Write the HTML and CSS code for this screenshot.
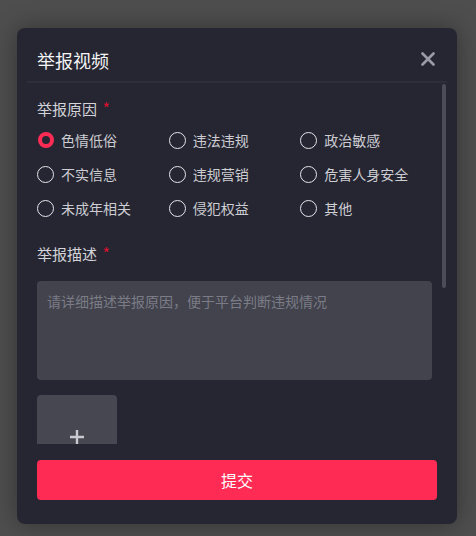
FILE: index.html
```html
<!DOCTYPE html>
<html lang="zh-CN">
<head>
  <meta charset="UTF-8">
  <meta name="viewport" content="width=device-width, initial-scale=1.0">
  <title>举报视频</title>
  <link rel="stylesheet" href="styles.css">
</head>
<body>

  <div class="modal">
    <!-- Header -->
    <div class="modal-header">
      <h2>举报视频</h2>
      <button class="close-btn" aria-label="关闭">
        <svg width="14" height="14" viewBox="0 0 14 14"><path d="M1.5 1.5 L12.5 12.5 M12.5 1.5 L1.5 12.5" stroke="#9a9ba4" stroke-width="2.6" stroke-linecap="round"/></svg>
      </button>
    </div>

    <!-- Scrolling form -->
    <div class="body-wrap">
      <div class="modal-body">
        <div class="field-label">举报原因 <span class="req">*</span></div>
        <div class="reasons">
          <label class="radio"><input type="radio" name="reason" checked><span>色情低俗</span></label>
          <label class="radio"><input type="radio" name="reason"><span>违法违规</span></label>
          <label class="radio"><input type="radio" name="reason"><span>政治敏感</span></label>
          <label class="radio"><input type="radio" name="reason"><span>不实信息</span></label>
          <label class="radio"><input type="radio" name="reason"><span>违规营销</span></label>
          <label class="radio"><input type="radio" name="reason"><span>危害人身安全</span></label>
          <label class="radio"><input type="radio" name="reason"><span>未成年相关</span></label>
          <label class="radio"><input type="radio" name="reason"><span>侵犯权益</span></label>
          <label class="radio"><input type="radio" name="reason"><span>其他</span></label>
        </div>

        <div class="field-label desc-label">举报描述 <span class="req">*</span></div>
        <textarea class="desc" placeholder="请详细描述举报原因，便于平台判断违规情况"></textarea>

        <div class="upload">
          <svg width="16" height="16" viewBox="0 0 16 16"><path d="M8 1 V15 M1 8 H15" stroke="#c9c9cf" stroke-width="2.4"/></svg>
        </div>
      </div>
      <!-- scrollbar thumb, drawn over the body -->
      <div class="scroll-thumb"></div>
    </div>

    <!-- Footer -->
    <div class="modal-footer">
      <button class="submit-btn">提交</button>
    </div>
  </div>

</body>
</html>
```

FILE: styles.css
```css
* {
  margin: 0;
  padding: 0;
  box-sizing: border-box;
}

body {
  font-family: "Noto Sans CJK SC", "Liberation Sans", sans-serif;
  background-color: #4e4e4e;
  height: 100vh;
  overflow: hidden;
  padding: 28px 0 0 17px;
}

.modal {
  width: 440px;
  height: 496px;
  background-color: #252632;
  border-radius: 8px;
  box-shadow: 0 0 24px rgba(0, 0, 0, 0.35);
  display: flex;
  flex-direction: column;
}

.modal-header {
  display: flex;
  justify-content: space-between;
  align-items: flex-start;
  margin: 0 10px;
  padding: 20px 12px 9px 10px;
  border-bottom: 2px solid #2d2e39;
}

.modal-header h2 {
  font-size: 18px;
  line-height: 24px;
  font-weight: 400;
  color: #f4f4f6;
}

.close-btn {
  background: none;
  border: none;
  cursor: pointer;
  margin-top: 4px;
  width: 14px;
  height: 14px;
  display: flex;
}

.body-wrap {
  flex: 1;
  min-height: 0;
  margin: 0 10px;
  position: relative;
}

.modal-body {
  height: 100%;
  padding: 16px 15px 0 10px;
  overflow: hidden;
}

.scroll-thumb {
  position: absolute;
  top: 1px;
  right: 1px;
  width: 4px;
  height: 204px;
  border-radius: 2px;
  background-color: #4b4c58;
}

.field-label {
  height: 20px;
  font-size: 15px;
  line-height: 20px;
  color: #d3d3d8;
}

.req {
  color: #d8102e;
  font-size: 16px;
  line-height: 1;
  margin-left: 2px;
}

.reasons {
  display: grid;
  grid-template-columns: repeat(3, 1fr);
  row-gap: 14px;
  margin-top: 11px;
}

.radio {
  display: flex;
  align-items: center;
  gap: 7px;
  height: 20px;
  font-size: 14px;
  color: #cdcdd2;
  cursor: pointer;
}

.radio input {
  appearance: none;
  -webkit-appearance: none;
  width: 17px;
  height: 17px;
  border: 1.5px solid #e6e6ea;
  border-radius: 50%;
  margin: 0;
  flex-shrink: 0;
}

.radio input:checked {
  border: 4px solid #fe2c55;
  width: 16px;
  height: 16px;
  margin: 0 0.5px;
}

.desc-label {
  margin-top: 26px;
}

.desc {
  display: block;
  width: 100%;
  height: 99px;
  margin-top: 17px;
  padding: 10px;
  background-color: #42434d;
  border: none;
  border-radius: 4px;
  resize: none;
  font-family: inherit;
  font-size: 14px;
  line-height: 20px;
  color: #e0e0e4;
  outline: none;
}

.desc::placeholder {
  color: #7b7c86;
}

.upload {
  width: 80px;
  height: 80px;
  margin-top: 15px;
  background-color: #464751;
  border-radius: 4px;
  display: flex;
  justify-content: center;
  align-items: center;
  padding-top: 4px;
}

.modal-footer {
  padding: 16px 20px 24px;
}

.submit-btn {
  width: 100%;
  height: 40px;
  background-color: #fe2c55;
  color: white;
  border: none;
  border-radius: 4px;
  font-family: inherit;
  font-size: 16px;
  cursor: pointer;
}
```
